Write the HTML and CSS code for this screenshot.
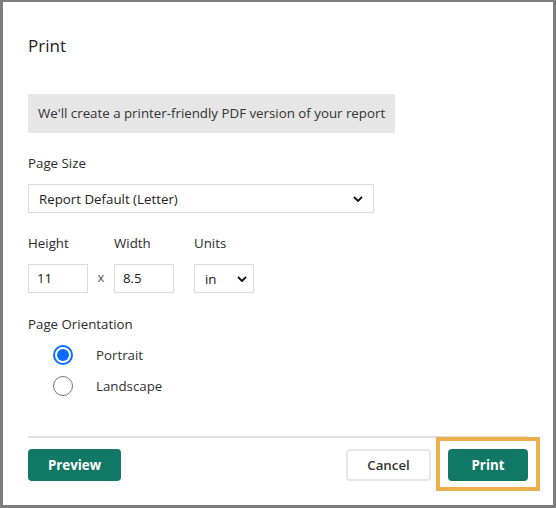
FILE: index.html
```html
<!DOCTYPE html>
<html>
<head>
<meta charset="utf-8">
<link rel="stylesheet" href="styles.css">
</head>
<body>
<div class="dialog">
  <h1 class="title">Print</h1>
  <div class="info">We'll create a printer-friendly PDF version of your report</div>

  <div class="label">Page Size</div>
  <div class="select wide">
    <span>Report Default (Letter)</span>
    <svg class="chev" viewBox="0 0 10 6" width="10" height="6"><path d="M1 1 L5 5 L9 1" fill="none" stroke="#111" stroke-width="1.8"/></svg>
  </div>

  <div class="dims">
    <div class="field">
      <div class="label">Height</div>
      <div class="input">11</div>
    </div>
    <div class="times">x</div>
    <div class="field">
      <div class="label">Width</div>
      <div class="input">8.5</div>
    </div>
    <div class="field units">
      <div class="label">Units</div>
      <div class="select small">
        <span>in</span>
        <svg class="chev" viewBox="0 0 10 6" width="10" height="6"><path d="M1 1 L5 5 L9 1" fill="none" stroke="#111" stroke-width="1.8"/></svg>
      </div>
    </div>
  </div>

  <div class="label orient">Page Orientation</div>
  <div class="radios">
    <div class="radio-row"><span class="radio checked"></span><span class="rlabel">Portrait</span></div>
    <div class="radio-row"><span class="radio"></span><span class="rlabel">Landscape</span></div>
  </div>

  <div class="footer">
    <button class="btn primary">Preview</button>
    <div class="right">
      <button class="btn secondary">Cancel</button>
      <button class="btn primary print">Print<span class="highlight"></span></button>
    </div>
  </div>
</div>
</body>
</html>
```

FILE: styles.css
```css
* { box-sizing: border-box; }
html, body { margin: 0; padding: 0; }
body {
  width: 556px;
  height: 508px;
  background: #fff;
  border-style: solid;
  border-color: #7d7d7d;
  border-width: 2px 3px 3px 3px;
  font-family: "Open Sans", "Noto Sans", sans-serif;
  color: #333;
  overflow: hidden;
}
.dialog {
  padding: 32px 25px 0 25px;
  display: flex;
  flex-direction: column;
}
.title {
  margin: 0;
  font-size: 17px;
  line-height: 24px;
  font-weight: 400;
  color: #222;
}
.info {
  margin-top: 36px;
  align-self: flex-start;
  background: #e6e6e6;
  height: 39px;
  line-height: 39px;
  padding: 0 10px;
  font-size: 13.3px;
  color: #333;
}
.label {
  font-size: 13.3px;
  line-height: 20px;
  color: #2b2b2b;
}
.info + .label { margin-top: 20px; }
.select {
  display: flex;
  align-items: center;
  justify-content: space-between;
  border: 1px solid #dcdcdc;
  background: #fff;
  font-size: 13.3px;
  color: #222;
}
.select.wide {
  margin-top: 11px;
  width: 346px;
  height: 29px;
  padding: 0 10px 0 10px;
}
.dims {
  display: flex;
  align-items: flex-end;
  margin-top: 20px;
}
.field { display: flex; flex-direction: column; }
.field .label { margin-bottom: 11px; }
.input {
  width: 60px;
  height: 29px;
  border: 1px solid #dcdcdc;
  padding: 0 8px;
  font-size: 13.3px;
  line-height: 27px;
  color: #222;
}
.times {
  width: 26px;
  text-align: center;
  font-size: 13px;
  line-height: 27px;
  color: #555;
  height: 29px;
}
.units { margin-left: 20px; }
.select.small {
  width: 60px;
  height: 29px;
  padding: 0 6px 0 10px;
}
.orient { margin-top: 21px; }
.radios {
  margin-top: 5px;
  padding-left: 25px;
  display: flex;
  flex-direction: column;
}
.radio-row {
  display: flex;
  align-items: center;
  height: 31px;
}
.radio {
  width: 20px;
  height: 20px;
  border-radius: 50%;
  border: 1.5px solid #767676;
  margin-right: 23px;
  position: relative;
  background: #fff;
}
.radio.checked { border: 2px solid #0a6cff; }
.radio.checked::after {
  content: "";
  position: absolute;
  left: 2px; top: 2px;
  width: 12px; height: 12px;
  border-radius: 50%;
  background: #0a6cff;
}
.rlabel { font-size: 13.3px; color: #333; }
.footer {
  margin-top: 35px;
  border-top: 2px solid #e0e0e0;
  padding-top: 11px;
  display: flex;
  justify-content: space-between;
  width: 500px;
}
.right { display: flex; gap: 17px; }
.btn {
  height: 32px;
  border-radius: 4px;
  font-family: "Open Sans", "Noto Sans", sans-serif;
  font-size: 13.3px;
  font-weight: 700;
  padding: 0;
  cursor: pointer;
}
.primary {
  background: #117865;
  color: #fff;
  border: none;
  width: 93px;
}
.print { width: 80px; position: relative; }
.secondary {
  background: #fff;
  color: #333;
  border: 2px solid #e6e6e6;
  width: 85px;
  font-weight: 600;
}
.highlight {
  position: absolute;
  left: -12px; right: -12px;
  top: -12px; bottom: -10px;
  border: 4px solid #ebb04d;
  pointer-events: none;
}
```
